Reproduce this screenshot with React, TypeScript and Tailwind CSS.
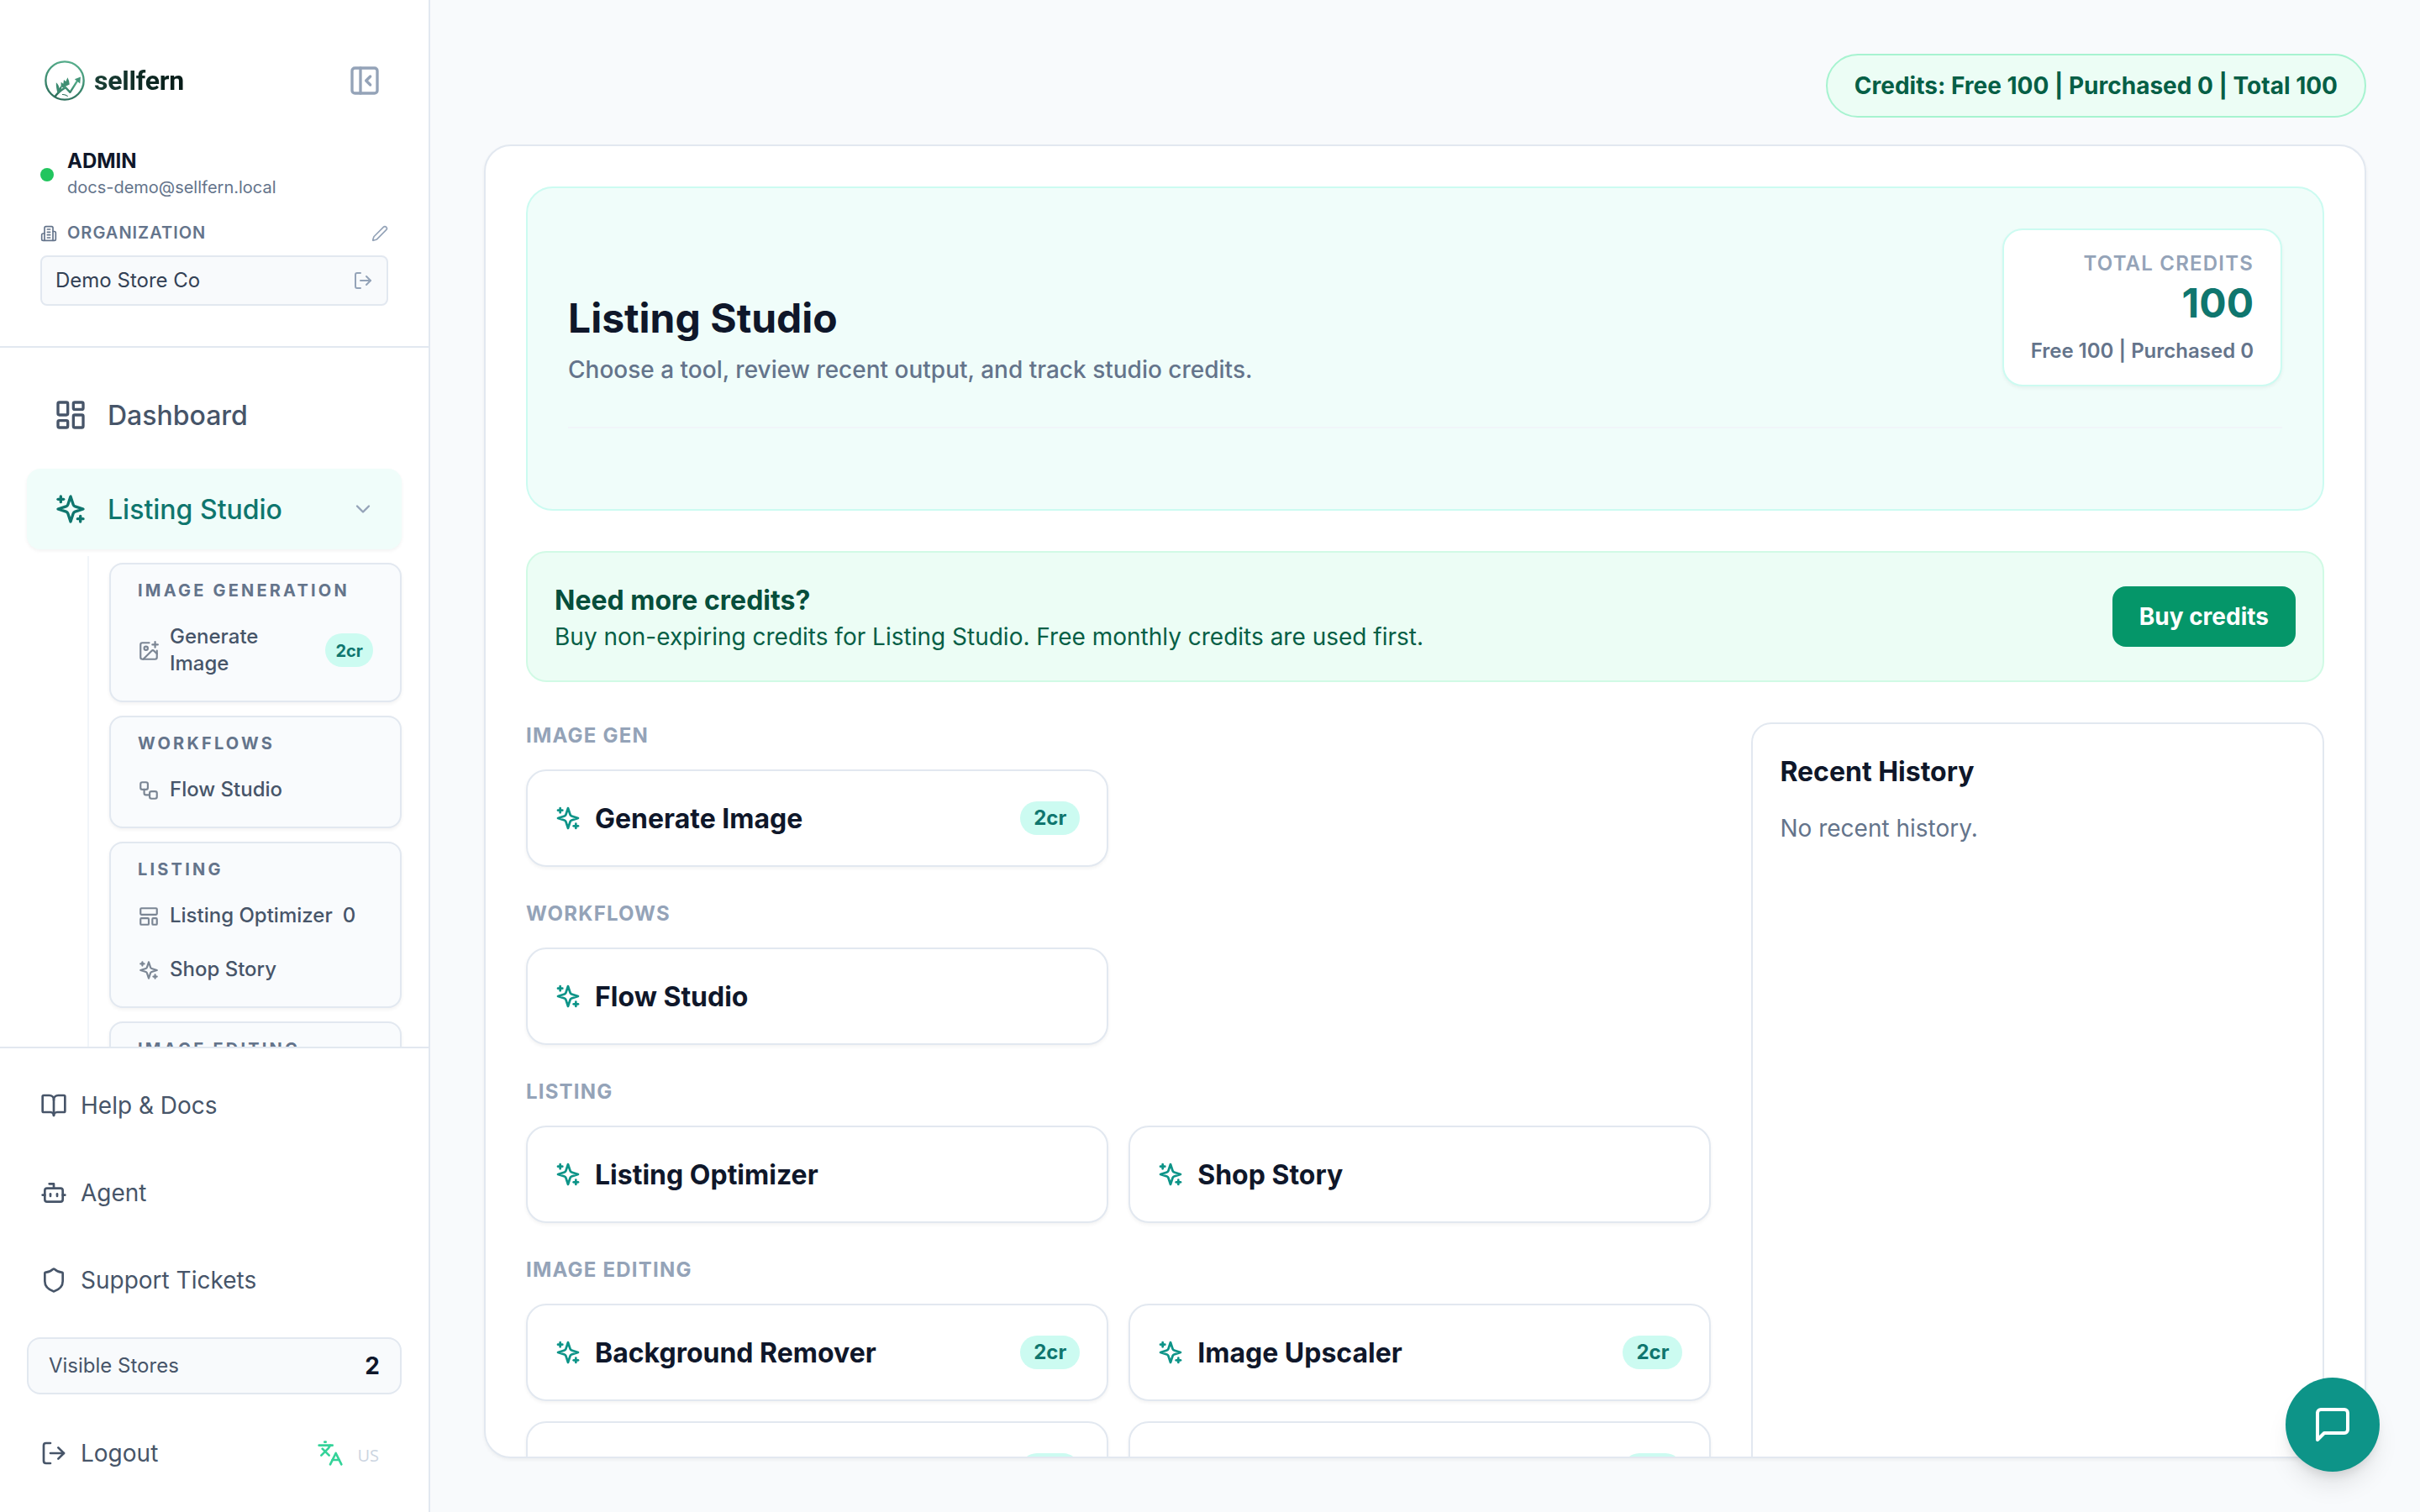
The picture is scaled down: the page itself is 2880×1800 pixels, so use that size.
import React from "react";
import {
  PanelLeftClose,
  Pen,
  LogOut,
  LayoutDashboard,
  ChevronDown,
  ImagePlus,
  Workflow,
  LayoutTemplate,
  BookOpen,
  Bot,
  Shield,
  Languages,
} from "lucide-react";

type IconProps = { className?: string; strokeWidth?: number };

function Sparkles({ className, strokeWidth = 2 }: IconProps) {
  return (
    <svg viewBox="0 0 24 24" fill="none" stroke="currentColor" strokeWidth={strokeWidth} strokeLinecap="round" strokeLinejoin="round" className={className}>
      <path d="m12 3-1.912 5.813a2 2 0 0 1-1.275 1.275L3 12l5.813 1.912a2 2 0 0 1 1.275 1.275L12 21l1.912-5.813a2 2 0 0 1 1.275-1.275L21 12l-5.813-1.912a2 2 0 0 1-1.275-1.275L12 3Z" />
      <path d="M5 3v4" />
      <path d="M19 17v4" />
      <path d="M3 5h4" />
      <path d="M17 19h4" />
    </svg>
  );
}

function Building({ className }: IconProps) {
  return (
    <svg viewBox="0 0 24 24" fill="none" stroke="currentColor" strokeWidth={2} strokeLinecap="round" strokeLinejoin="round" className={className}>
      <path d="M6 22V4a2 2 0 0 1 2-2h8a2 2 0 0 1 2 2v18Z" />
      <path d="M6 12H4a2 2 0 0 0-2 2v6a2 2 0 0 0 2 2h2" />
      <path d="M18 9h2a2 2 0 0 1 2 2v9a2 2 0 0 1-2 2h-2" />
      <path d="M10 6h4" />
      <path d="M10 10h4" />
      <path d="M10 14h4" />
      <path d="M10 18h4" />
    </svg>
  );
}

function MessageSquare({ className }: IconProps) {
  return (
    <svg viewBox="0 0 24 24" fill="none" stroke="currentColor" strokeWidth={2} strokeLinecap="round" strokeLinejoin="round" className={className}>
      <path d="M21 15a2 2 0 0 1-2 2H7l-4 4V5a2 2 0 0 1 2-2h14a2 2 0 0 1 2 2z" />
    </svg>
  );
}

function LogoMark({ className }: IconProps) {
  return (
    <svg viewBox="0 0 142 142" fill="none" className={className}>
      <defs>
        <linearGradient id="fern" x1="0.6" y1="0" x2="0.35" y2="1">
          <stop offset="0" stopColor="#55ad8b" />
          <stop offset="0.5" stopColor="#3f8f73" />
          <stop offset="1" stopColor="#2f6f5c" />
        </linearGradient>
      </defs>
      <circle cx="71" cy="71" r="67" stroke="url(#fern)" strokeWidth="7" />
      <path d="M36 128C46 114 58 104 74 95L90 112L118 68" stroke="url(#fern)" strokeWidth="7" strokeLinejoin="round" />
      <path d="M106 66L127 58L125 81Z" fill="#45977a" />
      <path d="M41 78C46 82 51 90 52 98C55 92 58 90 62 88C60 98 58 104 56 112L46 116C43 103 40 92 41 78Z" fill="#3b8a70" />
      <path d="M58 92L58 76L66 82L68 68L75 74L81 60L86 72L88 84L76 90L66 96Z" fill="#3f8f73" />
      <path d="M62 120Q72 119 82 126" stroke="#2f6f5c" strokeWidth="3" />
    </svg>
  );
}

function Credit({ small }: { small?: boolean }) {
  return small ? (
    <span className="ml-auto flex h-10 shrink-0 items-center rounded-full bg-[#ccfbf1] px-3 pt-px text-[20px] font-bold text-[#0f766e]">2cr</span>
  ) : (
    <span className="ml-auto flex h-10 shrink-0 items-center rounded-full bg-[#ccfbf1] px-4 text-[24px] font-bold text-[#0f766e]">2cr</span>
  );
}

function NavGroup({ title, children }: { title: string; children?: React.ReactNode }) {
  return (
    <div className="rounded-2xl border-2 border-[#e2e8f0] bg-[#f9fbfd] px-8 pt-4 pb-3 shadow-[0_2px_4px_rgba(0,0,0,0.05)]">
      <div className="mb-2 h-[30px] whitespace-nowrap text-[20px] leading-[30px] font-bold tracking-[3.2px] text-[#64748b]">{title}</div>
      {children}
    </div>
  );
}

function NavLeaf({ icon, children }: { icon: React.ReactNode; children: React.ReactNode }) {
  return (
    <div className="flex items-center gap-3 py-4 text-[24px] leading-8 font-medium text-[#475569]">
      <span className="shrink-0 pt-[2px] opacity-70 [&>svg]:size-[26px]">{icon}</span>
      {children}
    </div>
  );
}

function FooterLink({ icon, label }: { icon: React.ReactNode; label: string }) {
  return (
    <div className="flex h-[104px] items-center gap-4 px-4 text-[28px] text-[#475569]">
      <span className="[&>svg]:size-8">{icon}</span>
      {label}
    </div>
  );
}

function Sidebar() {
  return (
    <aside className="flex h-full w-[512px] shrink-0 flex-col border-r-2 border-[#e2e8f0] bg-white">
      <div className="h-[414px] shrink-0 border-b-2 border-[#e2e8f0] px-12 pt-[72px]">
        <div className="flex h-12 items-center">
          <LogoMark className="ml-[5px] size-[48px]" />
          <span className="ml-[11px] bg-linear-to-r from-[#1b4036] to-[#061a17] bg-clip-text font-[Roboto] text-[32px] leading-10 font-bold tracking-[-0.2px] text-transparent">sellfern</span>
          <PanelLeftClose className="mr-2 ml-auto size-10 text-[#94a3b8]" />
        </div>
        <div className="mt-14 flex items-center gap-4">
          <span className="mt-[2px] size-4 rounded-full bg-[#22c55e]" />
          <div>
            <div className="text-[24px] leading-8 font-bold text-[#0f172a]">ADMIN</div>
            <div className="text-[20px] leading-[30px] text-[#64748b]">docs-demo@sellfern.local</div>
          </div>
        </div>
        <div className="mt-6 flex h-[30px] items-center text-[#64748b]">
          <Building className="mt-[2px] size-5" />
          <span className="ml-3 text-[20px] leading-[30px] font-semibold tracking-[1px]">ORGANIZATION</span>
          <Pen className="mt-[2px] ml-auto size-5 text-[#94a3b8]" />
        </div>
        <div className="mt-[12px] flex h-[60px] items-center rounded-lg border-2 border-[#e2e8f0] bg-[#f8fafc] px-4 text-[24px] text-[#334155]">
          Demo Store Co
          <LogOut className="ml-auto size-6 text-[#94a3b8]" />
        </div>
      </div>

      <nav className="min-h-0 flex-1 overflow-hidden px-8 pt-8">
        <div className="flex h-24 items-center gap-6 rounded-2xl px-8 text-[32px] font-medium text-[#475569]">
          <LayoutDashboard className="size-10" />
          <span className="pt-[2px]">Dashboard</span>
        </div>
        <div className="mt-4 flex h-24 items-center gap-6 rounded-2xl bg-[#f0fdfa] px-8 text-[32px] font-medium text-[#0f766e] shadow-[0_2px_4px_rgba(0,0,0,0.05)]">
          <Sparkles className="size-10" />
          <span className="pt-[2px]">Listing Studio</span>
          <ChevronDown className="ml-auto size-7 text-[#94a3b8]" />
        </div>
        <div className="mt-2 ml-[72px] flex flex-col gap-4 border-l-2 border-[#f1f5f9] pt-2 pl-6">
          <NavGroup title="IMAGE GENERATION">
            <NavLeaf icon={<ImagePlus />}>
              <span className="w-[130px]">Generate Image</span>
              <Credit small />
            </NavLeaf>
          </NavGroup>
          <NavGroup title="WORKFLOWS">
            <NavLeaf icon={<Workflow />}>Flow Studio</NavLeaf>
          </NavGroup>
          <NavGroup title="LISTING">
            <NavLeaf icon={<LayoutTemplate />}>
              <span className="whitespace-nowrap">Listing Optimizer</span>
              <span>0</span>
            </NavLeaf>
            <NavLeaf icon={<Sparkles />}>Shop Story</NavLeaf>
          </NavGroup>
          <NavGroup title="IMAGE EDITING" />
        </div>
      </nav>

      <div className="h-[554px] shrink-0 border-t-2 border-[#e2e8f0] px-8 pt-4">
        <FooterLink icon={<BookOpen />} label="Help & Docs" />
        <FooterLink icon={<Bot />} label="Agent" />
        <FooterLink icon={<Shield />} label="Support Tickets" />
        <div className="mt-4 flex h-[68px] items-center justify-between rounded-2xl border-2 border-[#e2e8f0] bg-[#f8fafc] px-6 text-[24px] text-[#475569]">
          Visible Stores
          <span className="text-[28px] font-bold text-[#0f172a]">2</span>
        </div>
        <div className="mt-[18px] flex h-[104px] items-center gap-4 px-4 text-[28px] text-[#475569]">
          <LogOut className="size-8" />
          Logout
          <Languages className="ml-auto size-8 text-[#34d399]" />
          <span className="mr-[11px] pt-[5px] font-['Open_Sans'] text-[20px] leading-6 font-medium text-[#cbd5e1]">US</span>
        </div>
      </div>
    </aside>
  );
}

function Tool({ name, credit }: { name: string; credit?: boolean }) {
  return (
    <div className="flex h-[116px] items-center gap-4 rounded-3xl border-2 border-[#e2e8f0] bg-white px-8 shadow-[0_2px_4px_rgba(0,0,0,0.05)]">
      <Sparkles className="size-8 text-[#0d9488]" />
      <span className="pt-[2px] text-[32px] leading-[48px] font-bold text-[#0f172a]">{name}</span>
      {credit && <Credit />}
    </div>
  );
}

function ToolSection({ title, children }: { title: string; children: React.ReactNode }) {
  return (
    <section>
      <h2 className="mb-6 text-[24px] leading-8 font-bold tracking-[1.2px] text-[#94a3b8]">{title}</h2>
      <div className="grid grid-cols-2 gap-6">{children}</div>
    </section>
  );
}

export default function App() {
  return (
    <div className="relative flex h-[1800px] w-[2880px] overflow-hidden bg-[#f8fafc] font-[Inter,sans-serif]">
      <Sidebar />
      <main className="flex min-w-0 flex-1 flex-col gap-8 p-16">
        <div className="flex justify-end">
          <div className="rounded-full border-2 border-[#a7f3d0] bg-[#ecfdf5] px-8 py-4 text-[28px] leading-10 font-bold text-[#065f46]">
            Credits: Free 100 | Purchased 0 | Total 100
          </div>
        </div>
        <div className="min-h-0 flex-1 overflow-hidden rounded-[32px] border-2 border-[#e2e8f0] bg-white p-12 shadow-[0_2px_4px_rgba(0,0,0,0.05)]">
          <div className="rounded-[32px] border-2 border-[#ccfbf1] bg-[#f0fdfa] p-12">
            <div className="flex items-end justify-between border-b-2 border-[#f1f5f9] pb-12">
              <div>
                <h1 className="text-[48px] leading-[64px] font-bold text-[#0f172a]">Listing Studio</h1>
                <p className="mt-[9px] text-[28px] leading-10 font-medium text-[#64748b]">Choose a tool, review recent output, and track studio credits.</p>
              </div>
              <div className="rounded-3xl border-2 border-[#ccfbf1] bg-white px-8 py-6 text-right shadow-[0_2px_4px_rgba(0,0,0,0.05)]">
                <div className="text-[24px] leading-8 font-semibold tracking-[1.2px] text-[#94a3b8]">TOTAL CREDITS</div>
                <div className="text-[48px] leading-[62px] font-bold text-[#0f766e]">100</div>
                <div className="mt-[10px] text-[24px] leading-8 font-semibold text-[#64748b]">Free 100 | Purchased 0</div>
              </div>
            </div>
            <div className="h-12" />
          </div>

          <div className="mt-12 flex items-center justify-between rounded-3xl border-2 border-[#d1fae5] bg-[#ecfdf5] p-8">
            <div>
              <div className="-mb-px pt-px text-[32px] leading-[48px] font-bold text-[#064e3b]">Need more credits?</div>
              <div className="text-[28px] leading-10 text-[#065f46]">
                Buy non-expiring credits for Listing Studio. Free monthly credits are used first.
              </div>
            </div>
            <button className="h-[72px] rounded-2xl bg-[#059669] px-8 text-[28px] leading-10 font-bold text-white">Buy credits</button>
          </div>

          <div className="mt-12 flex gap-12">
            <div className="flex min-w-0 flex-1 flex-col gap-10">
              <ToolSection title="IMAGE GEN">
                <Tool name="Generate Image" credit />
              </ToolSection>
              <ToolSection title="WORKFLOWS">
                <Tool name="Flow Studio" />
              </ToolSection>
              <ToolSection title="LISTING">
                <Tool name="Listing Optimizer" />
                <Tool name="Shop Story" />
              </ToolSection>
              <ToolSection title="IMAGE EDITING">
                <Tool name="Background Remover" credit />
                <Tool name="Image Upscaler" credit />
                <Tool name="" credit />
                <Tool name="" credit />
              </ToolSection>
            </div>
            <div className="w-[681.6px] shrink-0 rounded-3xl border-2 border-[#e2e8f0] bg-white p-8">
              <h2 className="-mb-px pt-px text-[32px] leading-[48px] font-bold text-[#0f172a]">Recent History</h2>
              <p className="mt-6 text-[28px] leading-10 text-[#64748b]">No recent history.</p>
            </div>
          </div>
        </div>
      </main>
      <button className="absolute right-12 bottom-12 flex size-28 items-center justify-center rounded-full bg-[#0d9488] text-white shadow-[0_20px_30px_-6px_rgba(0,0,0,0.1),0_8px_12px_-4px_rgba(0,0,0,0.1)]">
        <MessageSquare className="size-12" />
      </button>
    </div>
  );
}
